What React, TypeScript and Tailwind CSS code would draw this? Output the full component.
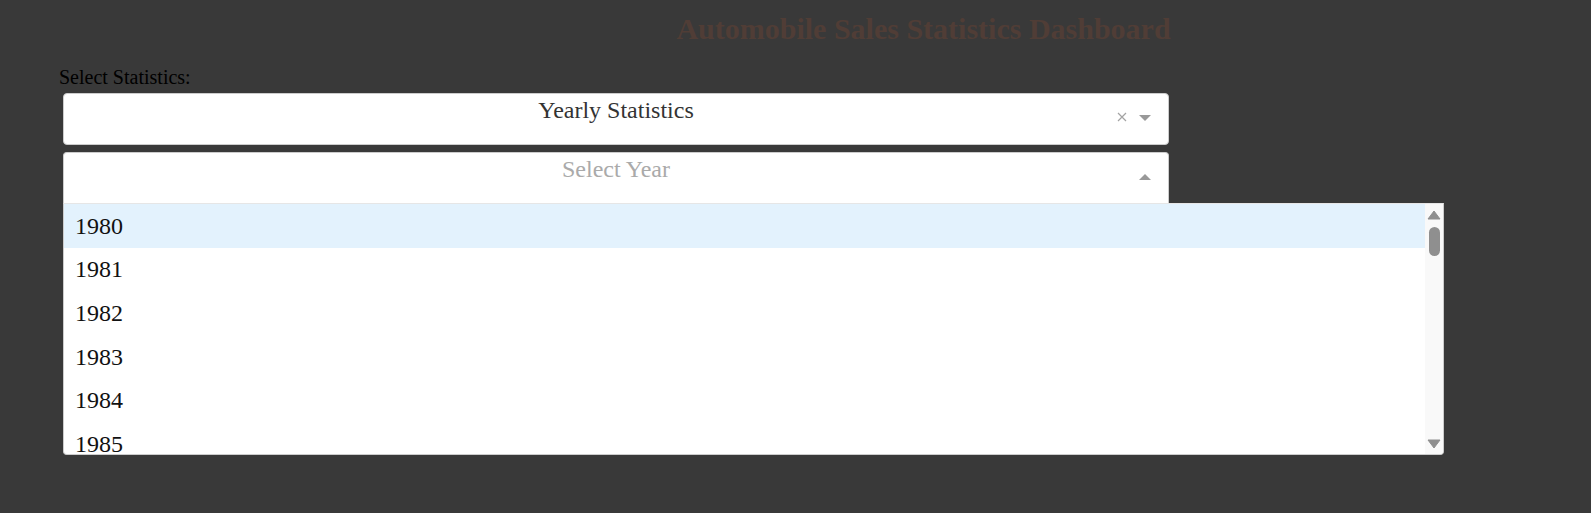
import React from 'react';

const years = [1980, 1981, 1982, 1983, 1984, 1985];

const ClearIcon = () => (
    <svg width="10" height="10" viewBox="0 0 10 10" className="block">
        <path d="M1 1 L9 9 M9 1 L1 9" stroke="#a3a3a3" strokeWidth="1.2" />
    </svg>
);

const Caret = ({ up, color = '#999', w = 12, h = 6 }: { up?: boolean; color?: string; w?: number; h?: number }) => (
    <svg width={w} height={h} viewBox={`0 0 ${w} ${h}`} className="block">
        {up ? (
            <path d={`M0 ${h} L${w / 2} 0 L${w} ${h} Z`} fill={color} />
        ) : (
            <path d={`M0 0 L${w} 0 L${w / 2} ${h} Z`} fill={color} />
        )}
    </svg>
);

const ScrollArrow = ({ up }: { up?: boolean }) => (
    <svg width="14" height="10" viewBox="0 0 14 10" className="block">
        {up ? (
            <path d="M1 9 L7 1 L13 9 Z" fill="#8f8f8f" stroke="#8f8f8f" strokeWidth="1" strokeLinejoin="round" />
        ) : (
            <path d="M1 1 L13 1 L7 9 Z" fill="#8f8f8f" stroke="#8f8f8f" strokeWidth="1" strokeLinejoin="round" />
        )}
    </svg>
);

const App = () => {
    return (
        <div className="min-h-screen w-full bg-[#393939] font-['Liberation_Serif',serif]">
            <h1 className="pt-[12px] pl-[256px] text-center text-[30px] leading-[34px] font-bold text-[#503D36]">
                Automobile Sales Statistics Dashboard
            </h1>

            <div className="mt-[20px] pl-[59px] text-[20px] leading-[23px] text-black">
                Select Statistics:
            </div>

            <div className="mt-[4px] pl-[63px] flex flex-col">
                {/* statistics dropdown */}
                <div className="relative w-[1106px] h-[52px] rounded-[4px] border border-[#cccccc] bg-white">
                    <div className="pt-[2px] text-center text-[24px] leading-[28px] text-[#333333]">
                        Yearly Statistics
                    </div>
                    <div className="absolute right-[17px] top-[21px] flex items-start gap-[12px]">
                        <div className="-mt-[3px]">
                            <ClearIcon />
                        </div>
                        <Caret />
                    </div>
                </div>

                {/* year dropdown, open */}
                <div className="relative mt-[7px] w-[1106px] h-[51px] rounded-t-[4px] border border-b-0 border-[#cccccc] bg-white">
                    <div className="pt-[2px] text-center text-[24px] leading-[28px] text-[#aaaaaa]">
                        Select Year
                    </div>
                    <div className="absolute right-[17px] top-[21px]">
                        <Caret up />
                    </div>
                </div>

                <div className="flex w-[1381px] h-[252px] rounded-b-[4px] border border-t border-[#cccccc] border-t-[#e6e6e6] bg-white overflow-hidden">
                    <div className="flex-1 overflow-hidden">
                        {years.map((year, i) => (
                            <div
                                key={year}
                                className={
                                    i === 0
                                        ? 'h-[43.6px] pl-[11px] flex items-center text-[24px] text-[#111111] bg-[#e3f2fd]'
                                        : 'h-[43.6px] pl-[11px] flex items-center text-[24px] text-[#111111]'
                                }
                            >
                                {year}
                            </div>
                        ))}
                    </div>
                    <div className="w-[18px] flex flex-col items-center bg-[#f9f9f9] pt-[6px] pb-[5px]">
                        <ScrollArrow up />
                        <div className="mt-[7px] w-[11px] h-[29px] rounded-full bg-[#8f8f8f]" />
                        <div className="flex-1" />
                        <ScrollArrow />
                    </div>
                </div>
            </div>
        </div>
    );
};

export default App;
